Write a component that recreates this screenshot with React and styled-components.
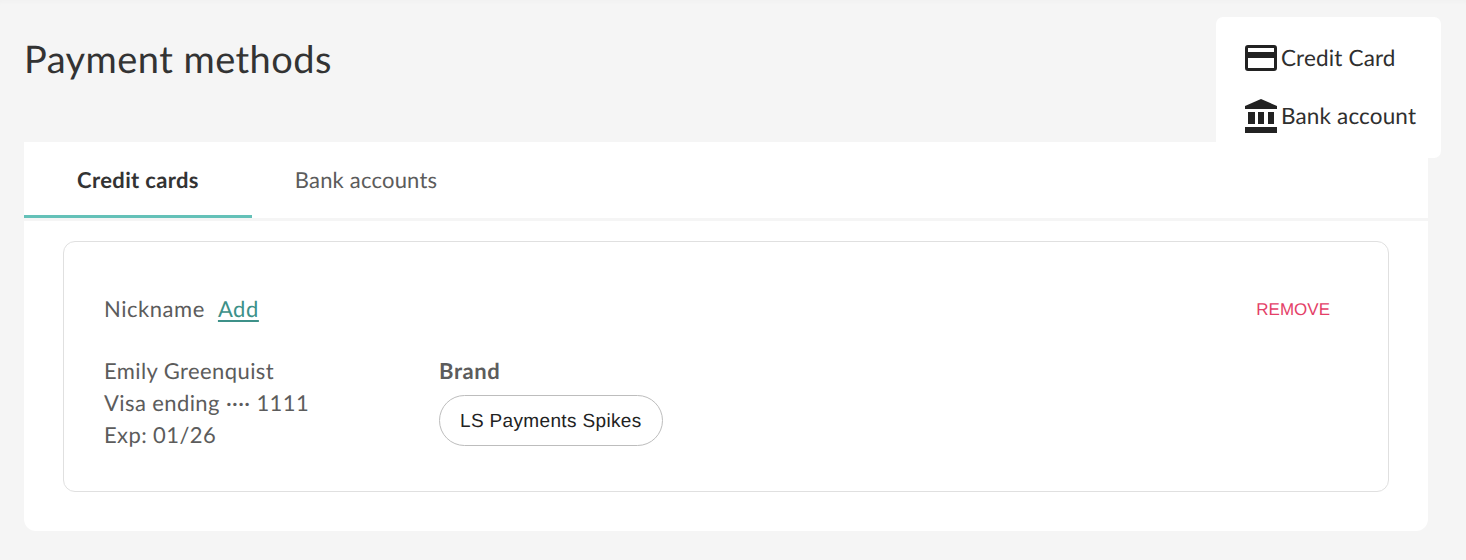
import React from 'react';
import styled, { createGlobalStyle } from 'styled-components';

const GlobalStyle = createGlobalStyle`
    html, body {
        margin: 0;
        padding: 0;
        background: #f5f5f5;
        font-family: Lato, "Liberation Sans", sans-serif;
        text-rendering: geometricPrecision;
    }
`;

const Page = styled.div`
    position: relative;
    width: 1466px;
    height: 560px;
    box-sizing: border-box;
    padding: 0 38px 0 24px;
    overflow: hidden;
    box-shadow: inset 0 4px 4px -2px rgba(0, 0, 0, 0.02);
`;

const Header = styled.header`
    height: 142px;
    padding-top: 36px;
    box-sizing: border-box;
`;

const Title = styled.h1`
    margin: 0;
    font-size: 38px;
    line-height: 46px;
    font-weight: 400;
    letter-spacing: 0.45px;
    color: #333;
`;

const Panel = styled.section`
    height: 389px;
    box-sizing: border-box;
    background: #fff;
    border-radius: 0 0 12px 12px;
`;

const Tabs = styled.nav`
    display: flex;
    height: 79px;
    box-sizing: border-box;
    border-bottom: 3px solid #f5f5f5;
`;

const Tab = styled.div`
    width: 228px;
    height: 76px;
    box-sizing: border-box;
    display: flex;
    align-items: center;
    justify-content: center;
    padding-top: 1px;
    font-size: 22px;
    letter-spacing: ${p => (p.$active ? '0.35px' : '0.2px')};
    font-weight: ${p => (p.$active ? 700 : 400)};
    color: ${p => (p.$active ? '#333' : '#5c5c5c')};
    border-bottom: 3px solid ${p => (p.$active ? '#64c1b8' : 'transparent')};
`;

const Body = styled.div`
    padding: 20px 39px 0;
`;

const MethodCard = styled.article`
    height: 251px;
    box-sizing: border-box;
    border: 1px solid #e0e0e0;
    border-radius: 12px;
    padding: 52px 58px 0 40px;
`;

const TopRow = styled.div`
    display: flex;
    justify-content: space-between;
    align-items: center;
    height: 32px;
`;

const Nickname = styled.div`
    display: flex;
    gap: 13px;
    font-size: 22px;
    letter-spacing: 0.55px;
    color: #5c5c5c;
    margin-top: -3px;
`;

const AddLink = styled.a`
    color: #3d9189;
    text-decoration: underline;
    text-underline-offset: 3px;
`;

const RemoveButton = styled.span`
    font-family: "Liberation Sans", Arial, sans-serif;
    font-size: 17px;
    color: #e43f68;
`;

const Details = styled.div`
    display: flex;
    margin-top: 29px;
`;

const Holder = styled.div`
    width: 335px;
    font-size: 22px;
    line-height: 32px;
    letter-spacing: 0.4px;
    color: #5c5c5c;
`;

const Brand = styled.div`
    display: flex;
    flex-direction: column;
    align-items: flex-start;
`;

const BrandLabel = styled.div`
    font-size: 22px;
    line-height: 32px;
    letter-spacing: 0.6px;
    font-weight: 700;
    color: #5c5c5c;
`;

const Pill = styled.div`
    margin-top: 8px;
    height: 51px;
    box-sizing: border-box;
    padding: 2px 20px 0;
    display: flex;
    align-items: center;
    border: 1px solid #bdbdbd;
    border-radius: 26px;
    font-family: "Liberation Sans", Arial, sans-serif;
    font-size: 19px;
    letter-spacing: 0.35px;
    color: #222;
`;

const Menu = styled.div`
    position: absolute;
    top: 17px;
    left: 1216px;
    width: 225px;
    height: 141px;
    box-sizing: border-box;
    padding: 12px 0 0 29px;
    background: #fff;
    border-radius: 7px;
`;

const MenuItem = styled.div`
    display: flex;
    align-items: center;
    gap: 4px;
    height: 58px;
    font-size: 22.5px;
    line-height: 56px;
    letter-spacing: 0.15px;
    color: #2f2f2f;
`;

const CardIcon = () => (
    <svg width="32" height="26" viewBox="0 0 32 26" fill="#222">
        <path
            fillRule="evenodd"
            d="M3 0h26a3 3 0 0 1 3 3v20a3 3 0 0 1-3 3H3a3 3 0 0 1-3-3V3a3 3 0 0 1 3-3zm0 3v4h26V3zm0 10v10h26V13z"
        />
    </svg>
);

const BankIcon = () => (
    <svg width="32" height="34" viewBox="0 0 32 34" fill="#222">
        <path d="M16 0 32 7v3H0V7z" />
        <path d="M3 13h7v12H3zM13 13h6v12h-6zM23 13h6v12h-6z" />
        <path d="M0 28h32v6H0z" />
    </svg>
);

export default function App() {
    return (
        <Page>
            <GlobalStyle />
            <Header>
                <Title>Payment methods</Title>
            </Header>
            <Panel>
                <Tabs>
                    <Tab $active>Credit cards</Tab>
                    <Tab>Bank accounts</Tab>
                </Tabs>
                <Body>
                    <MethodCard>
                        <TopRow>
                            <Nickname>
                                <span>Nickname</span>
                                <AddLink>Add</AddLink>
                            </Nickname>
                            <RemoveButton>REMOVE</RemoveButton>
                        </TopRow>
                        <Details>
                            <Holder>
                                Emily Greenquist
                                <br />
                                Visa ending ···· 1111
                                <br />
                                Exp: 01/26
                            </Holder>
                            <Brand>
                                <BrandLabel>Brand</BrandLabel>
                                <Pill>LS Payments Spikes</Pill>
                            </Brand>
                        </Details>
                    </MethodCard>
                </Body>
            </Panel>
            <Menu>
                <MenuItem>
                    <CardIcon />
                    Credit Card
                </MenuItem>
                <MenuItem>
                    <BankIcon />
                    Bank account
                </MenuItem>
            </Menu>
        </Page>
    );
}
